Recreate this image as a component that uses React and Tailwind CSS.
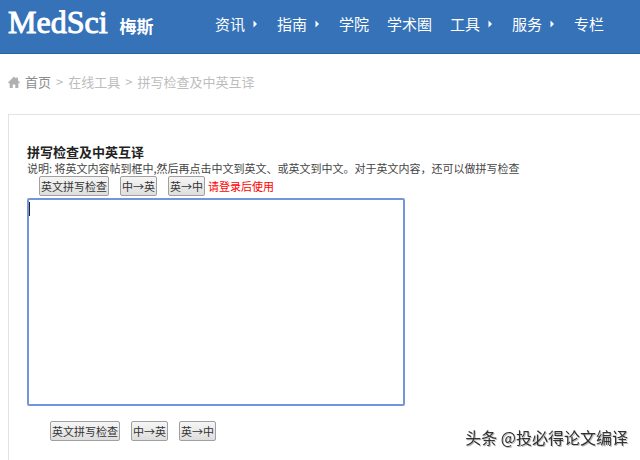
import { useState } from "react";

const navItems = [
  { label: "资讯", hasMenu: true },
  { label: "指南", hasMenu: true },
  { label: "学院" },
  { label: "学术圈" },
  { label: "工具", hasMenu: true },
  { label: "服务", hasMenu: true },
  { label: "专栏" },
];

const actions = ["英文拼写检查", "中→英", "英→中"];

const HomeIcon = () => (
  <svg viewBox="0 0 12 12" className="h-3 w-3 shrink-0 fill-[#b0b0b0]" aria-hidden="true">
    <path d="M6 0.5 L8.3 2.8 V1.5 H10 V4.5 L12 6.6 L11.2 7.2 H10.3 V12 H7.3 V8.4 H4.7 V12 H1.7 V7.2 H0.8 L0 6.6 Z" />
  </svg>
);

const Header = () => (
  <header className="flex h-[54px] items-start border-b border-[#2a62a3] bg-[#3572b8] pl-2 text-white">
    <a href="#" className="flex w-[207px] shrink-0 items-baseline gap-3">
      <span className="text-[32px] leading-[44px] [font-family:'Liberation_Serif',serif] [-webkit-text-stroke:1px_white]">
        MedSci
      </span>
      <span className="text-[17px] font-bold">梅斯</span>
    </a>
    <nav className="flex gap-[18px] pt-3 text-[15px] leading-6">
      {navItems.map((item) => (
        <a key={item.label} href="#" className="flex shrink-0 items-center gap-2">
          {item.label}
          {item.hasMenu && (
            <svg viewBox="0 0 6 8" className="h-2 w-1.5 fill-white" aria-hidden="true">
              <path d="M0.5 0.5 L4 4 L0.5 7.5 Z" />
            </svg>
          )}
        </a>
      ))}
    </nav>
  </header>
);

const Breadcrumb = () => (
  <nav className="flex items-center gap-[5px] pt-[18px] pl-2 text-[13px] leading-5 text-[#bdbdbd]">
    <HomeIcon />
    <a href="#" className="text-[#8c8c8c]">首页</a>
    <span>&gt;</span>
    <a href="#">在线工具</a>
    <span>&gt;</span>
    <span>拼写检查及中英互译</span>
  </nav>
);

const Actions = () =>
  actions.map((label) => (
    <button
      key={label}
      type="button"
      className="h-5 shrink-0 rounded-[2px] border border-[#a0a0a0] bg-linear-to-b from-[#f6f6f6] to-[#dedede] px-px text-[11px] leading-4 text-[#333]"
    >
      {label}
    </button>
  ));

const App = () => {
  const [text, setText] = useState("");

  return (
    <div className="flex min-h-screen flex-col bg-white [font-family:'Noto_Sans_CJK_SC',sans-serif]">
      <Header />
      <Breadcrumb />
      <main className="mt-[22px] ml-2 grow border-t border-l border-[#e3e3e3] pt-[29px] pl-[18px]">
        <h1 className="text-[13px] leading-4 font-bold text-[#222]">拼写检查及中英互译</h1>
        <p className="text-[11px] leading-4 text-[#444]">
          说明: 将英文内容帖到框中,然后再点击中文到英文、或英文到中文。对于英文内容，还可以做拼写检查
        </p>
        <div className="flex items-center gap-[11px] pl-3">
          <Actions />
          <span className="-ml-2 text-[11px] leading-4 text-[#f00]">请登录后使用</span>
        </div>
        <div className="relative mt-0.5 w-[378px] max-w-full">
          <textarea
            aria-label="英文内容"
            value={text}
            onChange={(e) => setText(e.target.value)}
            className="block h-52 w-full resize-none rounded-[2px] border-2 border-[#7196de] bg-white p-0.5 text-[13px] outline-none"
          />
          {!text && <span className="pointer-events-none absolute top-1 left-0.5 h-3.5 w-px bg-[#222]" />}
        </div>
        <div className="flex gap-[11px] pt-[15px] pl-[23px]">
          <Actions />
        </div>
      </main>
      <div className="pointer-events-none fixed right-3 bottom-[11px] text-[16px] leading-6 text-[#333] [text-shadow:1px_1px_0_#bbb]">
        头条 @投必得论文编译
      </div>
    </div>
  );
};

export default App;
